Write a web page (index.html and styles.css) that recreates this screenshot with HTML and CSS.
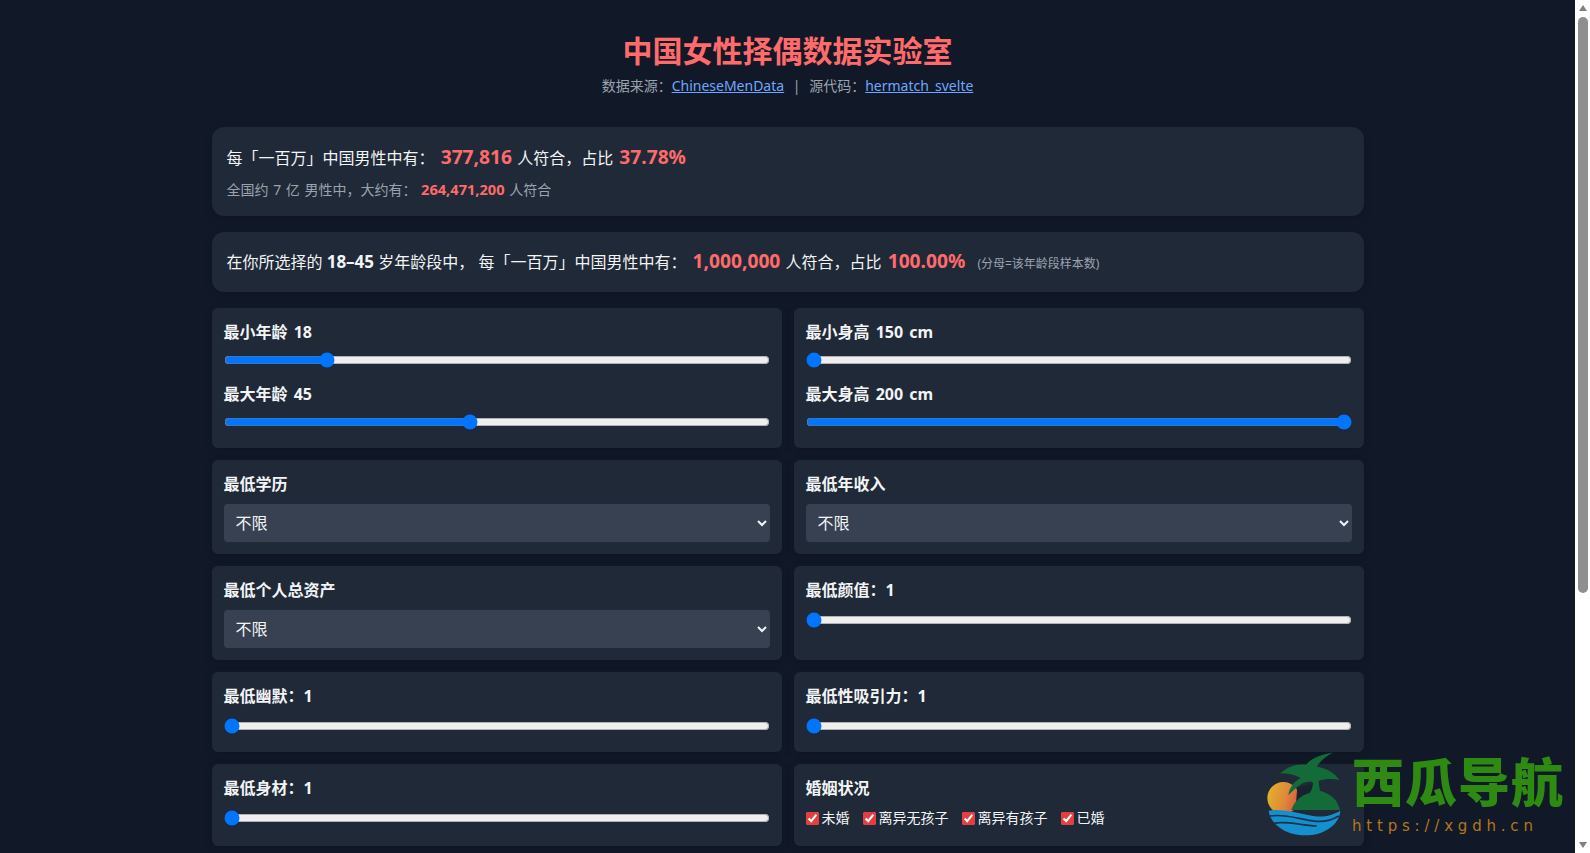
FILE: index.html
```html
<!DOCTYPE html>
<html lang="zh-CN">
<head>
  <meta charset="UTF-8" />
  <meta name="viewport" content="width=device-width, initial-scale=1.0"/>
  <title>中国女性择偶数据实验室</title>
  <link rel="stylesheet" href="styles.css">
</head>
<body>

<div class="window">
  <main class="page">
    <div class="container">
      <h1>中国女性择偶数据实验室</h1>
      <p class="source">数据来源：<a href="#">ChineseMenData</a> <span class="sep">|</span> 源代码：<a href="#">hermatch_svelte</a></p>

      <!-- Results -->
      <section class="result">
        <div class="result-main">每「一百万」中国男性中有： <b class="num">377,816</b> 人符合，占比 <b class="num">37.78%</b></div>
        <div class="result-sub">全国约 7 亿 男性中，大约有： <b class="num-small">264,471,200</b> 人符合</div>
      </section>
      <section class="result result-age">
        <div class="result-main">在你所选择的 <b class="range-text">18–45</b> 岁年龄段中， 每「一百万」中国男性中有： <b class="num">1,000,000</b> 人符合，占比 <b class="num">100.00%</b> <span class="note">(分母=该年龄段样本数)</span></div>
      </section>

      <!-- Filters -->
      <div class="filters">
        <div class="card card-pair">
          <label class="field-label">最小年龄 18</label>
          <input type="range" min="0" max="100" value="18">
          <label class="field-label">最大年龄 45</label>
          <input type="range" min="0" max="100" value="45">
        </div>
        <div class="card card-pair">
          <label class="field-label">最小身高 150 cm</label>
          <input type="range" min="150" max="200" value="150">
          <label class="field-label">最大身高 200 cm</label>
          <input type="range" min="150" max="200" value="200">
        </div>

        <div class="card">
          <label class="field-label">最低学历</label>
          <select><option>不限</option></select>
        </div>
        <div class="card">
          <label class="field-label">最低年收入</label>
          <select><option>不限</option></select>
        </div>

        <div class="card">
          <label class="field-label">最低个人总资产</label>
          <select><option>不限</option></select>
        </div>
        <div class="card card-single">
          <label class="field-label">最低颜值：1</label>
          <input type="range" min="1" max="100" value="1">
        </div>

        <div class="card card-single">
          <label class="field-label">最低幽默：1</label>
          <input type="range" min="1" max="100" value="1">
        </div>
        <div class="card card-single">
          <label class="field-label">最低性吸引力：1</label>
          <input type="range" min="1" max="100" value="1">
        </div>

        <div class="card card-single">
          <label class="field-label">最低身材：1</label>
          <input type="range" min="1" max="100" value="1">
        </div>
        <div class="card card-single">
          <label class="field-label">婚姻状况</label>
          <div class="checks">
            <label class="check"><input type="checkbox" checked>未婚</label>
            <label class="check"><input type="checkbox" checked>离异无孩子</label>
            <label class="check"><input type="checkbox" checked>离异有孩子</label>
            <label class="check"><input type="checkbox" checked>已婚</label>
          </div>
        </div>
      </div>
    </div>

    <!-- Watermark -->
    <div class="watermark">
      <svg class="wm-logo" viewBox="0 0 270 276" width="90" height="92">
        <defs>
          <linearGradient id="sun" x1="0" y1="0.2" x2="1" y2="0.5">
            <stop offset="0.1" stop-color="#e2ad2b"/>
            <stop offset="0.6" stop-color="#e0883a"/>
            <stop offset="1" stop-color="#d65a3e"/>
          </linearGradient>
        </defs>
        <circle cx="70" cy="150" r="48" fill="url(#sun)"/>
        <path fill="#1a2130" d="M112 118 L160 108 L172 140 L130 172 L108 165Z"/>
        <path fill="#136b3a" d="M218 14 C185 18 155 30 138 50 C112 46 82 56 60 76 C82 76 104 80 122 90 C100 102 88 120 85 142 C100 128 112 116 128 106 C136 102 146 100 158 102 C160 112 156 124 150 134 C122 142 102 160 94 186 L240 186 C236 160 216 138 180 128 C178 116 176 106 176 98 C198 92 220 92 238 96 C226 76 204 62 170 56 C182 38 198 24 218 14Z"/>
        <path fill="#1690cc" d="M26 188 C70 180 120 198 165 205 C195 208 222 200 241 188 C238 232 190 262 136 262 C80 262 32 232 26 188Z"/>
        <path fill="none" stroke="#17324d" stroke-width="5" d="M30 204 C80 196 120 216 168 220 C196 222 220 214 236 204"/>
        <path fill="none" stroke="#17324d" stroke-width="5" d="M40 226 C80 218 120 232 170 234"/>
      </svg>
      <div class="wm-text">
        <div class="wm-name">西瓜导航</div>
        <div class="wm-url">https://xgdh.cn</div>
      </div>
    </div>
  </main>

  <!-- Scrollbar -->
  <div class="scrollbar">
    <span class="arrow arrow-up"></span>
    <span class="thumb"></span>
    <span class="arrow arrow-down"></span>
  </div>
</div>

</body>
</html>
```

FILE: styles.css
```css
* {
  box-sizing: border-box;
}
html, body {
  margin: 0;
  height: 100%;
  overflow: hidden;
}
body {
  font-family: "Noto Sans", "Noto Sans CJK SC", sans-serif;
  background: #111827;
  color: #f3f4f6;
}
.window {
  display: flex;
  height: 100vh;
}
.page {
  flex: 1;
  min-width: 0;
  overflow: hidden;
  position: relative;
}
.container {
  width: 1152px;
  margin: 0 auto;
  padding-top: 30px;
}
h1 {
  margin: 0;
  text-align: center;
  font-size: 30px;
  line-height: 42px;
  font-weight: 700;
  color: #ff6b6b;
}
.source {
  margin: 3px 0 30px;
  text-align: center;
  font-size: 14px;
  line-height: 22px;
  color: #9ca3af;
}
.source a {
  color: #6ea8fe;
}
.sep {
  margin: 0 5px;
}
.result {
  background: #1f2937;
  border-radius: 12px;
  padding: 17px 15px 15px;
  margin-bottom: 16px;
  height: 89px;
  box-shadow: 0 2px 8px rgba(0,0,0,0.15);
}
.result-age {
  height: 60px;
  padding: 0 15px;
  display: flex;
  align-items: center;
}
.result-main {
  font-size: 16px;
  line-height: 26px;
  color: #f3f4f6;
}
.result-sub {
  margin-top: 7px;
  font-size: 14px;
  line-height: 22px;
  word-spacing: 1px;
  color: #9ca3af;
}
.num {
  font-size: 19.2px;
  color: #ff6b6b;
  margin: 0 1px 0 2px;
}
.num-small {
  font-size: 14.6px;
  color: #ff6b6b;
  margin: 0;
}
.range-text {
  font-size: 17px;
}
.note {
  margin-left: 7px;
  font-size: 12px;
  color: #9ca3af;
}
.filters {
  display: grid;
  grid-template-columns: 1fr 1fr;
  gap: 12px;
}
.card {
  background: #1f2937;
  border-radius: 6px;
  padding: 12px;
  box-shadow: 0 2px 8px rgba(0,0,0,0.15);
}
.field-label {
  display: block;
  font-size: 16px;
  line-height: 24px;
  font-weight: 700;
  word-spacing: 2px;
  color: #f3f4f6;
  margin-bottom: 8px;
}
.card input[type="range"] {
  display: block;
  width: 100%;
  height: 16px;
  margin: 0;
}
.card-pair {
  padding-bottom: 18px;
}
.card-pair input[type="range"] {
  margin-bottom: 14px;
}
.card-pair input[type="range"]:last-child {
  margin-bottom: 0;
}
.card-single .field-label {
  margin-bottom: 10px;
}
.card-single {
  padding-bottom: 18px;
}
select {
  display: block;
  width: 100%;
  height: 38px;
  padding: 0 8px;
  background: #374151;
  color: #f3f4f6;
  border: none;
  border-radius: 4px;
  font-family: inherit;
  font-size: 16px;
}
.checks {
  display: flex;
  gap: 13px;
  margin-top: -2px;
}
.check {
  display: inline-flex;
  align-items: center;
  gap: 3px;
  font-size: 14px;
  line-height: 20px;
  color: #f3f4f6;
}
.check input {
  margin: 0;
  width: 13px;
  height: 13px;
  accent-color: #e53e3e;
}
.watermark {
  position: absolute;
  left: 1260px;
  top: 745px;
  display: flex;
  align-items: flex-start;
}
.wm-logo {
  display: block;
  margin: 3px 2px 0 0;
}
.wm-text {
  padding-top: 5px;
}
.wm-name {
  font-family: "Noto Sans CJK SC", sans-serif;
  font-size: 52px;
  line-height: 60px;
  font-weight: 900;
  letter-spacing: 1px;
  color: #2f8a13;
}
.wm-url {
  margin-top: 6px;
  font-family: "DejaVu Sans", sans-serif;
  font-size: 15px;
  line-height: 20px;
  letter-spacing: 4.8px;
  color: #b5761d;
}
.scrollbar {
  width: 15px;
  background: #fff;
  display: flex;
  flex-direction: column;
  align-items: center;
  position: relative;
}
.arrow {
  width: 0;
  height: 0;
  border-left: 4.5px solid transparent;
  border-right: 4.5px solid transparent;
}
.arrow-up {
  margin-top: 5px;
  border-bottom: 6px solid #808080;
}
.arrow-down {
  margin-top: auto;
  margin-bottom: 5px;
  border-top: 6px solid #808080;
}
.thumb {
  width: 10px;
  height: 576px;
  margin-top: 6px;
  background: #8f8f8f;
  border-radius: 5px;
}
```
